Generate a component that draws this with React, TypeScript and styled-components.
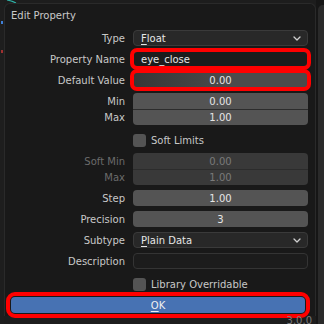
import styled, { createGlobalStyle, css } from "styled-components";

const GlobalStyle = createGlobalStyle`
  html, body {
    margin: 0;
    padding: 0;
    background: #1d1d1d;
  }
  body {
    width: 324px;
    height: 324px;
    overflow: hidden;
    font-family: "DejaVu Sans", sans-serif;
    font-size: 10px;
  }
`;

type Pos = "single" | "top" | "bottom";

const radiusFor = (pos: Pos) => {
  if (pos === "top") return "4px 4px 0 0";
  if (pos === "bottom") return "0 0 4px 4px";
  return "4px";
};

const Chevron = () => (
  <svg width="8" height="5" viewBox="0 0 8 5">
    <path d="M1 1 L4 4 L7 1" stroke="#d0d0d0" strokeWidth="1.3" fill="none" strokeLinecap="round" strokeLinejoin="round" />
  </svg>
);

export default function App() {
  return (
    <>
      <GlobalStyle />
      <Page>
        <LeftStrip>
          <Dot $color="#3f7fd6" />
          <Dot $color="#a03030" $top={26} />
        </LeftStrip>
        <Middle>
          <TopGap>
            <svg width="24" height="4" viewBox="0 0 24 4">
              <path d="M3 0 Q8 1 12 3" stroke="#2fb3a8" strokeWidth="1.2" fill="none" />
            </svg>
          </TopGap>
          <Dialog>
            <Title>Edit Property</Title>
            <Form>
              <Row>
                <Label>Type</Label>
                <Dropdown>
                  <span><Key>F</Key>loat</span>
                  <Chevron />
                </Dropdown>
              </Row>
              <Row>
                <Label>Property Name</Label>
                <TextField $marked>eye_close</TextField>
              </Row>
              <Row>
                <Label>Default Value</Label>
                <NumberField $marked $active>0.00</NumberField>
              </Row>
              <Stack>
                <Label>Min</Label>
                <NumberField $pos="top">0.00</NumberField>
                <Label>Max</Label>
                <NumberField $pos="bottom">1.00</NumberField>
              </Stack>
              <CheckRow>
                <span />
                <CheckLabel>
                  <Box />
                  Soft Limits
                </CheckLabel>
              </CheckRow>
              <Stack>
                <Label $disabled>Soft Min</Label>
                <NumberField $pos="top" $disabled>0.00</NumberField>
                <Label $disabled>Max</Label>
                <NumberField $pos="bottom" $disabled>1.00</NumberField>
              </Stack>
              <Row>
                <Label>Step</Label>
                <NumberField>1.00</NumberField>
              </Row>
              <Row>
                <Label>Precision</Label>
                <NumberField>3</NumberField>
              </Row>
              <Row>
                <Label>Subtype</Label>
                <Dropdown>
                  <span><Key>P</Key>lain Data</span>
                  <Chevron />
                </Dropdown>
              </Row>
              <Row>
                <Label>Description</Label>
                <TextField />
              </Row>
              <CheckRow>
                <span />
                <CheckLabel>
                  <Box />
                  Library Overridable
                </CheckLabel>
              </CheckRow>
              <OkButton>
                <Key>O</Key>K
              </OkButton>
            </Form>
          </Dialog>
          <Footer>
            <Version>3.0.0</Version>
          </Footer>
        </Middle>
        <RightStrip>
          <OtherPanel />
        </RightStrip>
      </Page>
    </>
  );
}

const Page = styled.div`
  display: flex;
  width: 324px;
  height: 324px;
`;

const LeftStrip = styled.div`
  width: 4px;
  flex: none;
  background: #1e1e1e;
  display: flex;
  flex-direction: column;
  align-items: center;
  padding-top: 21px;
  box-sizing: border-box;
`;

const Dot = styled.div<{ $color: string; $top?: number }>`
  width: 2px;
  height: 3px;
  margin-top: ${(p) => p.$top ?? 0}px;
  background: ${(p) => p.$color};
`;

const Middle = styled.div`
  width: 312px;
  flex: none;
  display: flex;
  flex-direction: column;
`;

const TopGap = styled.div`
  height: 3px;
  overflow: hidden;
  line-height: 0;
`;

const Dialog = styled.div`
  flex: 1;
  background: #191919;
  border: 1px solid #2a2a2a;
  border-bottom: none;
  border-radius: 6px 6px 0 0;
  padding: 6px 7px 0 6px;
  box-sizing: border-box;
  display: flex;
  flex-direction: column;
`;

const Title = styled.div`
  color: #c9c9c9;
  font-size: 10px;
  line-height: 12px;
  height: 12px;
  margin-bottom: 8px;
`;

const Form = styled.div`
  display: flex;
  flex-direction: column;
  gap: 5px;
`;

const Row = styled.div`
  display: grid;
  grid-template-columns: 114px 175px;
  column-gap: 8px;
  height: 16px;
  align-items: center;
`;

const Stack = styled.div`
  display: grid;
  grid-template-columns: 114px 175px;
  grid-auto-rows: 16px;
  column-gap: 8px;
  align-items: center;
`;

const CheckRow = styled(Row)`
  margin-top: 2px;
`;

const Label = styled.div<{ $disabled?: boolean }>`
  text-align: right;
  color: ${(p) => (p.$disabled ? "#6b6b6b" : "#c8c8c8")};
  white-space: nowrap;
`;

const marked = css`
  outline: 4px solid #ff0000;
  outline-offset: -1px;
`;

const Field = styled.div<{ $marked?: boolean }>`
  height: 16px;
  box-sizing: border-box;
  border-radius: 4px;
  display: flex;
  align-items: center;
  color: #e6e6e6;
  ${(p) => p.$marked && marked}
`;

const Dropdown = styled(Field)`
  background: #282828;
  border: 1px solid #3a3a3a;
  justify-content: space-between;
  padding: 0 6px 0 7px;
`;

const TextField = styled(Field)`
  background: #1c1c1c;
  border: 1px solid #343434;
  padding: 0 7px;
`;

const NumberField = styled(Field)<{ $pos?: Pos; $disabled?: boolean; $active?: boolean }>`
  justify-content: center;
  border-radius: ${(p) => radiusFor(p.$pos ?? "single")};
  background: ${(p) =>
    p.$disabled
      ? "#393939"
      : p.$active
      ? "linear-gradient(90deg, #363636, #4b4b4b 55%)"
      : "#545454"};
  color: ${(p) => (p.$disabled ? "#7a7a7a" : "#e6e6e6")};
  ${(p) => p.$pos === "bottom" && "border-top: 1px solid #2c2c2c;"}
`;

const Key = styled.span`
  text-decoration: underline;
  text-underline-offset: 2px;
`;

const CheckLabel = styled.div`
  display: flex;
  align-items: center;
  gap: 5px;
  color: #c8c8c8;
`;

const Box = styled.div`
  width: 13px;
  height: 13px;
  border-radius: 3px;
  background: #545454;
`;

const OkButton = styled.div`
  height: 16px;
  margin-right: 3px;
  border-radius: 4px;
  background: #4772b3;
  color: #f0f0f0;
  display: flex;
  align-items: center;
  justify-content: center;
  outline: 4px solid #ff0000;
  outline-offset: 1px;
`;

const Footer = styled.div`
  height: 8px;
  overflow: hidden;
  display: flex;
  justify-content: flex-end;
  padding-right: 4px;
`;

const Version = styled.div`
  color: #7a7a7a;
  font-size: 10px;
  line-height: 12px;
  margin-top: -1px;
`;

const RightStrip = styled.div`
  width: 8px;
  flex: none;
  background: #161616;
  padding: 5px 0 0 2px;
  box-sizing: border-box;
  display: flex;
`;

const OtherPanel = styled.div`
  flex: 1;
  background: #2a2a2a;
  border-radius: 5px 0 0 0;
`;
